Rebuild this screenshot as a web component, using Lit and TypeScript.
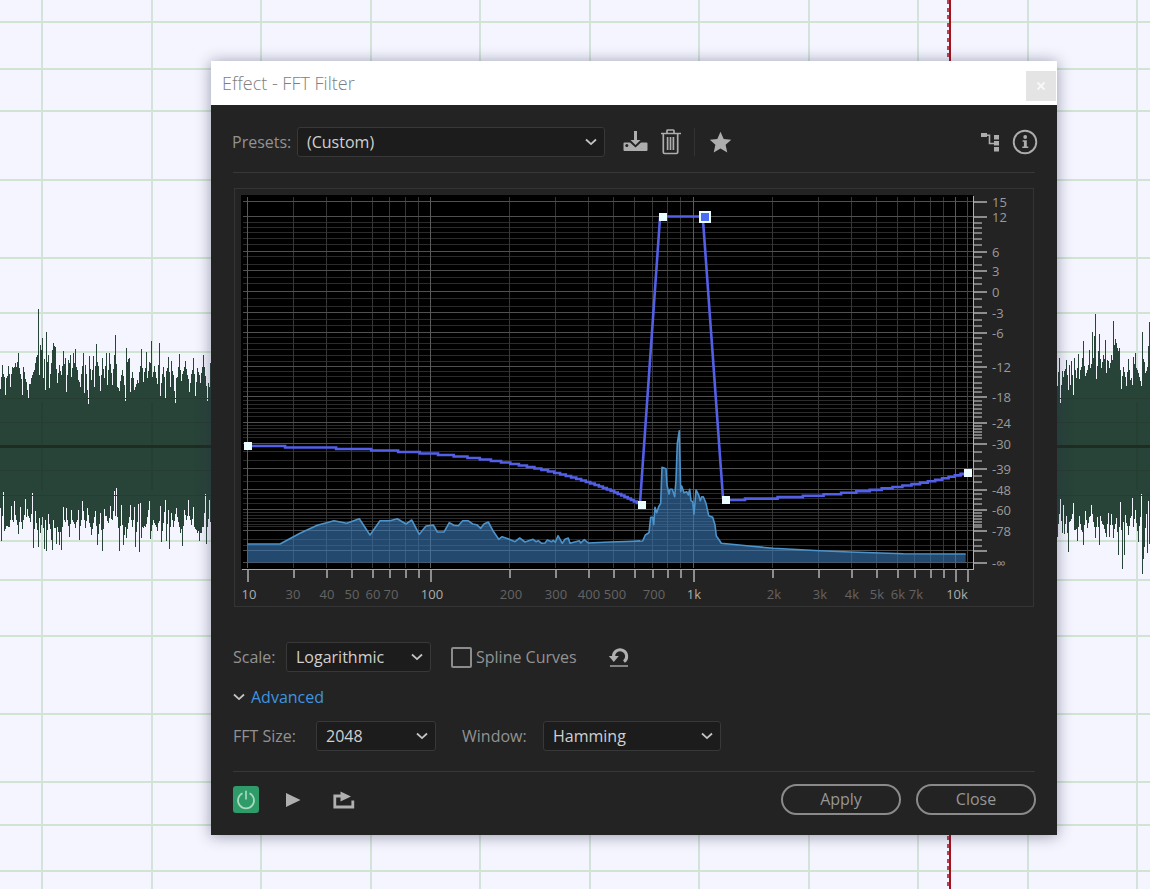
import { LitElement, html, svg, css } from "lit";
import { customElement, property } from "lit/decorators.js";

type Point = [number, number];

// Waveform outline: [column, edge] turning points, three units per screen pixel.
const LEFT_TOP: Point[] = [[0,298],[6,225],[15,315],[24,228],[30,292],[36,230],[46,220],[55,190],[67,315],[70,230],[84,325],[93,265],[102,240],[110,200],[116,57],[118,255],[122,165],[127,145],[131,265],[134,208],[137,300],[139,125],[145,195],[149,293],[157,180],[160,158],[166,172],[172,280],[178,225],[184,255],[190,182],[196,205],[199,307],[205,210],[211,195],[214,260],[220,188],[226,178],[235,270],[241,290],[250,188],[254,310],[257,225],[265,342],[268,198],[275,270],[281,197],[284,290],[290,162],[296,228],[302,303],[308,205],[313,265],[319,188],[322,285],[328,188],[338,285],[346,135],[352,290],[359,302],[367,240],[376,332],[379,173],[388,205],[391,305],[397,247],[403,300],[415,280],[424,176],[430,275],[439,187],[443,265],[448,215],[454,153],[457,262],[463,228],[472,283],[479,160],[482,318],[490,230],[496,326],[499,243],[505,200],[510,290],[515,212],[526,338],[532,262],[538,192],[544,272],[556,213],[568,305],[580,203],[586,318],[592,233],[600,280],[610,195],[622,332],[628,290],[631,220]];
const LEFT_BOTTOM: Point[] = [[0,655],[4,752],[10,605],[13,722],[28,710],[34,648],[39,695],[43,632],[55,732],[61,652],[67,718],[76,628],[91,697],[97,610],[100,775],[106,662],[115,770],[118,685],[121,728],[127,680],[133,778],[136,690],[139,783],[145,673],[157,780],[160,690],[169,762],[172,710],[178,765],[184,780],[190,652],[196,697],[199,655],[208,740],[214,660],[226,715],[235,660],[238,750],[247,633],[256,715],[262,655],[274,735],[286,663],[292,765],[301,670],[307,782],[313,658],[325,700],[331,648],[337,690],[343,602],[346,678],[349,595],[358,782],[364,645],[370,765],[376,710],[379,745],[391,645],[397,710],[403,652],[406,770],[415,642],[418,785],[421,640],[424,745],[439,703],[448,633],[451,748],[460,690],[472,722],[481,648],[484,755],[496,630],[499,752],[505,660],[508,777],[514,668],[520,710],[529,655],[547,768],[553,660],[559,690],[565,630],[574,705],[580,650],[583,710],[598,752],[610,710],[616,613],[619,762],[628,630],[631,697]];
const RIGHT_TOP: Point[] = [[22,287],[28,205],[31,340],[37,243],[40,260],[49,210],[55,300],[58,225],[61,285],[64,212],[70,315],[73,205],[79,265],[85,192],[88,267],[100,153],[106,258],[112,240],[118,180],[121,235],[127,127],[130,205],[136,73],[139,268],[148,132],[154,235],[166,150],[169,248],[172,210],[181,220],[190,92],[199,160],[205,182],[208,173],[214,297],[220,232],[229,288],[235,207],[241,270],[247,285],[250,200],[256,190],[262,240],[274,288],[277,126],[286,250],[292,232],[298,95]];
const RIGHT_BOTTOM: Point[] = [[22,740],[31,627],[37,730],[40,645],[43,732],[49,678],[55,785],[58,697],[70,640],[73,720],[82,752],[88,678],[100,765],[106,662],[112,715],[124,645],[136,745],[142,680],[148,765],[151,678],[169,740],[175,668],[178,740],[184,673],[190,745],[199,685],[205,795],[211,637],[217,838],[220,695],[223,795],[226,675],[235,735],[247,625],[250,710],[256,660],[265,757],[274,612],[277,853],[283,770],[289,672],[292,790],[295,632],[298,762]];

// Expands turning points to one value per column, with a repeatable jitter between them.
function expand(points: Point[], originX: number, base: number): Map<number, number> {
  const out = new Map<number, number>();
  let seed = 17;
  const rand = () => (seed = (seed * 16807) % 2147483647) / 2147483647;
  const known = points.map(([x, y]) => [Math.floor(x / 3), y] as Point);
  for (let i = 0; i < known.length; i++) {
    const [x0, y0] = known[i];
    out.set(originX + x0, 290 + y0 / 3);
    const next = known[i + 1];
    if (!next) break;
    for (let x = x0 + 1; x < next[0]; x++) {
      const t = (x - x0) / (next[0] - x0);
      const line = y0 + (next[1] - y0) * t;
      out.set(originX + x, 290 + (line + (base - line) * rand() * 0.7) / 3);
    }
  }
  return out;
}

function wavePath(top: Point[], bottom: Point[], originX: number): string {
  const upper = expand(top, originX, 245);
  const lower = expand(bottom, originX, 702);
  let d = "";
  for (const [x, y] of upper) {
    const y2 = lower.get(x) ?? 520;
    d += `M${x} ${Math.round(y)}h1V${Math.round(y2)}h-1z`;
  }
  return d;
}

const WAVE = wavePath(LEFT_TOP, LEFT_BOTTOM, 0) + wavePath(RIGHT_TOP, RIGHT_BOTTOM, 1050);
const TRACK_ROWS = [21, 68, 110, 179, 257, 312, 351, 540, 579, 635, 713, 781, 824, 870];
const TRACK_COLS = [41, 151, 260, 370, 479, 589, 698, 808, 917, 1027, 1136];
const INNER_ROWS = [398, 422, 470, 495];

// Plot geometry, measured from the panel's own corner.
const MAJOR_ROWS: [number, string][] = [[14,"15"],[29,"12"],[64,"6"],[83,"3"],[104,"0"],[125,"-3"],[145,"-6"],[179,"-12"],[209,"-18"],[235,"-24"],[256,"-30"],[281,"-39"],[302,"-48"],[322,"-60"],[343,"-78"],[363,""],[375,"-∞"]];
const MINOR_ROWS = [35,40,45,51,57,69,77,90,96,111,119,132,138,150,156,162,168,174,184,189,195,200,204,213,217,221,225,229,238,241,244,247,250,264,273,288,294,306,311,316,325,328,331,334,337,339,352,358];
const xOf = (hz: number) => Math.round(197 + 262.5 * Math.log10(hz / 100) - 1);
const MINOR_COLS = [30,40,50,60,70,80,90,200,300,400,500,600,700,800,900,2000,3000,4000,5000,6000,7000,8000,9000].map(xOf);
const MAJOR_COLS = [14, 197, 460, 722];
const FREQ_LABELS: [number, string, boolean][] = [[15,"10",true],[59,"30",false],[93,"40",false],[118,"50",false],[139,"60",false],[157,"70",false],[198,"100",true],[277,"200",false],[322,"300",false],[355,"400",false],[381,"500",false],[420,"700",false],[460,"1k",true],[540,"2k",false],[586,"3k",false],[618,"4k",false],[643,"5k",false],[664,"6k",false],[682,"7k",false],[723,"10k",true]];

const SPECTRUM_A: Point[] = [[52,432],[150,432],[210,400],[262,376],[312,362],[350,370],[388,356],[420,405],[450,362],[480,362],[502,356],[528,372],[545,360],[568,403],[588,378],[610,375],[622,396],[642,396],[658,368],[672,376],[685,377],[698,362],[714,362],[728,372],[740,374],[752,385],[762,372],[775,366],[790,394],[806,418],[816,410],[836,417],[855,425],[869,414],[885,426],[909,418],[918,425],[925,422],[935,430],[945,429],[952,420],[965,425],[970,421],[976,427],[984,407],[997,430],[1005,418],[1015,414],[1020,430],[1048,422],[1052,429],[1063,419],[1075,429],[1140,426],[1230,423]];
const SPECTRUM_B: Point[] = [[0,425],[68,423],[76,405],[87,398],[92,352],[98,352],[101,374],[105,322],[110,338],[116,320],[122,310],[126,202],[138,206],[141,255],[147,282],[150,268],[157,268],[164,290],[168,240],[172,130],[178,92],[182,275],[185,258],[192,278],[200,275],[205,285],[209,268],[213,302],[218,305],[222,343],[228,270],[236,285],[241,302],[245,290],[250,290],[258,310],[266,347],[278,352],[285,375],[289,408],[296,418],[304,430],[380,437],[460,445],[600,452],[690,456],[850,461],[1037,462]];
const SPECTRUM = [
  ...SPECTRUM_A.map(([x, y]) => [x / 3 - 4, y / 3 + 212]),
  ...SPECTRUM_B.map(([x, y]) => [x / 3 + 386, y / 3 + 212]),
].map(([x, y]) => `${x.toFixed(1)},${y.toFixed(1)}`);

function curve(): string {
  const px = (hz: number) => 197 + 262.5 * Math.log10(hz / 100);
  let d = "M14 258";
  let y = 258;
  for (let hz = 27.8; hz < 630; hz += 15.7) {
    d += `H${px(hz).toFixed(1)}`;
    y += 1.5;
    d += `V${y.toFixed(1)}`;
  }
  d += "L406 315L426 30L429 28.5H471L469 32L489 310L492 312";
  y = 312;
  for (let hz = 1571; hz < 10900; hz += 520) {
    d += `H${px(hz).toFixed(1)}`;
    y -= 1.45;
    d += `V${y.toFixed(1)}`;
  }
  return d + "H733";
}
const CURVE = curve();

@customElement("track-view")
class TrackView extends LitElement {
  static styles = css`
    :host { display: block; background: #f4f5fe; }
    .track { display: block; width: 100%; height: 100%; }
  `;
  render() {
    return html`<svg class="track" viewBox="0 0 1150 889" preserveAspectRatio="none" shape-rendering="crispEdges" aria-hidden="true">
      ${TRACK_COLS.map((x) => svg`<rect x=${x} y="0" width="2" height="889" fill="#d3e3d9"/>`)}
      ${TRACK_ROWS.map((y) => svg`<rect x="0" y=${y} width="1150" height="2" fill="#cfe4d3"/>`)}
      <path d=${WAVE} fill="#284338"/>
      ${INNER_ROWS.map((y) => svg`<rect x="0" y=${y} width="1150" height="1" fill="#263d32"/>`)}
      ${TRACK_COLS.map((x) => svg`<rect x=${x} y="402" width="2" height="88" fill="#263f34"/>`)}
      <rect x="0" y="445" width="1150" height="3" fill="#1f2c20"/>
      <rect x="949" y="0" width="2" height="889" fill="#a01420"/>
      <path d="M948 0V889" stroke="#b84552" stroke-width="2" stroke-dasharray="4 3.6"/>
    </svg>`;
  }
}

@customElement("filter-graph")
class FilterGraph extends LitElement {
  static styles = css`
    :host { display: block; }
    .graph { display: block; width: 100%; height: auto; font-family: "Open Sans", "Noto Sans", sans-serif; font-size: 13px; }
    .gain { fill: #9a9a9a; }
    .freq { fill: #646464; text-anchor: middle; }
    .decade { fill: #adadad; }
  `;
  render() {
    return html`<svg class="graph" viewBox="0 0 800 419" role="img" aria-label="FFT filter response">
      <g shape-rendering="crispEdges">
        <rect x="0.5" y="0.5" width="799" height="418" fill="none" stroke="#343434"/>
        <rect x="7" y="7" width="732" height="374" fill="#000"/>
        ${MINOR_ROWS.map((y) => svg`<rect x="9" y=${y - 1} width="730" height="1" fill="#2b2b2b"/>`)}
        ${MINOR_COLS.map((x) => svg`<rect x=${x} y="9" width="1" height="371" fill="#363636"/>`)}
        ${MAJOR_ROWS.map(([y]) => svg`<rect x="9" y=${y - 1} width="730" height="1" fill="#505050"/>`)}
        ${MAJOR_COLS.map((x) => svg`<rect x=${x - 1} y="9" width="1" height="371" fill="#5a5a5a"/>`)}
        <rect x="733" y="9" width="1" height="371" fill="#444"/>
      </g>
      <polygon points=${`13.3,374.5 ${SPECTRUM.join(" ")} 731.7,374.5`} fill="rgb(58,122,183)" fill-opacity="0.6"/>
      <polyline points=${SPECTRUM.join(" ")} fill="none" stroke="#4c93cb" stroke-width="1.6" stroke-linejoin="round"/>
      <g shape-rendering="crispEdges" fill="#8d8d8d">
        <rect x="8" y="381" width="732" height="1" fill="#a8a8a8"/>
        <rect x="739" y="8" width="1" height="374" fill="#b0b0b0"/>
        ${MAJOR_ROWS.map(([y]) => svg`<rect x="740" y=${y - 1} width="13" height="2"/>`)}
        ${MINOR_ROWS.map((y) => svg`<rect x="740" y=${y - 1} width="8" height="2" fill="#7c7c7c"/>`)}
        ${MINOR_COLS.map((x) => svg`<rect x=${x} y="382" width="2" height="8"/>`)}
        ${[...MAJOR_COLS, 734].map((x) => svg`<rect x=${x - 1} y="382" width="2" height="12"/>`)}
      </g>
      <path d=${CURVE} fill="none" stroke="#525fe6" stroke-width="2.6"/>
      <g fill="#eafdff" shape-rendering="crispEdges">
        <rect x="10" y="254" width="8" height="8"/>
        <rect x="404" y="313" width="8" height="8"/>
        <rect x="425" y="25" width="8" height="8"/>
        <rect x="488" y="308" width="8" height="8"/>
        <rect x="730" y="281" width="8" height="8"/>
        <rect x="465" y="23" width="12" height="12"/>
        <rect x="467" y="25" width="8" height="8" fill="#4c6cf4"/>
      </g>
      ${MAJOR_ROWS.map(([y, t]) => (t ? svg`<text class="gain" x="758" y=${y + 5}>${t}</text>` : ""))}
      ${FREQ_LABELS.map(([x, t, d]) => svg`<text class=${d ? "freq decade" : "freq"} x=${x} y="411">${t}</text>`)}
    </svg>`;
  }
}

@customElement("field-select")
class FieldSelect extends LitElement {
  @property() label = "";
  @property({ attribute: false }) options: string[] = [];
  static styles = css`
    :host { display: flex; align-items: center; }
    .label { flex: 0 0 var(--label-width, auto); color: #929292; white-space: nowrap; }
    .box { display: grid; flex: 0 0 var(--box-width, auto); align-items: center; }
    .select {
      grid-area: 1 / 1; appearance: none; box-sizing: border-box; width: 100%; height: 30px; margin: 0;
      padding: 0 28px 1px 9px; border: 1px solid #383838; border-radius: 3px;
      background: #1c1c1c; color: #d0d0d0; font: inherit;
    }
    .chevron { grid-area: 1 / 1; justify-self: end; margin-right: 7px; width: 14px; height: 10px; pointer-events: none; }
  `;
  render() {
    return html`<label class="label" for="field">${this.label}</label>
      <span class="box">
        <select class="select" id="field">${this.options.map((o) => html`<option>${o}</option>`)}</select>
        <svg class="chevron" viewBox="0 0 14 10"><path d="M2 2.500l5 4.600 5-4.600" fill="none" stroke="#c4c4c4" stroke-width="1.800"/></svg>
      </span>`;
  }
}

@customElement("app-root")
class AppRoot extends LitElement {
  static styles = css`
    :host { display: block; }
    .stage {
      display: grid; position: relative; box-sizing: border-box; min-height: 100vh;
      padding: 61px 93px 54px 211px; align-items: start;
      font: 16px/20px "Open Sans", "Noto Sans", sans-serif;
    }
    .backdrop { position: absolute; inset: 0; }
    .dialog { position: relative; min-width: 0; background: #232323; box-shadow: 0 1px 14px rgba(40, 40, 70, 0.45); }
    .titlebar { display: flex; height: 44px; justify-content: space-between; align-items: center; padding: 0 1px 0 11px; background: #fff; }
    .title { margin: 0; font-size: 18px; line-height: 24px; font-weight: 300; color: #808080; }
    .button { display: grid; place-items: center; padding: 0; border: 0; background: none; color: #adadad; font: inherit; }
    .close { width: 30px; height: 30px; margin-top: 6px; background: #e4e4e4; color: #f8f8f8; }
    .toolbar { display: flex; align-items: center; margin: 22px 19px 15px 21px; height: 30px; }
    .preset { --label-width: 65px; --box-width: 308px; }
    .save { margin-left: 17px; }
    .trash { margin-left: 11px; }
    .rule { width: 1px; height: 28px; margin: 0 14px 0 12px; background: #333; }
    .route { margin-left: auto; }
    .info { margin-left: 12px; }
    .divider { height: 0; margin: 0 22px; border: 0; border-top: 1px solid #383838; }
    .graph { margin: 15px 23px 35px; }
    .row { display: flex; align-items: center; height: 30px; margin: 0 22px; }
    .scale { --label-width: 53px; --box-width: 145px; }
    .spline { display: flex; align-items: center; margin-left: 20px; color: #929292; }
    .check { appearance: none; box-sizing: border-box; width: 21px; height: 21px; margin: 0 4px 0 0; border: 2px solid #8c8c8c; border-radius: 2px; }
    .reset { margin-left: 31px; }
    .advanced { display: flex; align-items: center; gap: 6px; margin: 15px 22px 14px; height: 20px; color: #3f94e0; }
    .size { --label-width: 83px; --box-width: 120px; }
    .window { --label-width: 81px; --box-width: 178px; margin-left: 26px; }
    .last { margin-bottom: 20px; }
    .footer { display: flex; align-items: center; margin: 12px 21px 20px 22px; height: 31px; }
    .power { width: 26px; height: 27px; border-radius: 3px; background: #2f9b69; color: #a8d8c0; }
    .play { margin-left: 26px; }
    .loop { margin-left: 32px; }
    .pill { box-sizing: border-box; width: 120px; height: 31px; padding-bottom: 2px; border: 2px solid #8a8a8a; border-radius: 16px; color: #969696; }
    .apply { margin-left: auto; }
    .dismiss { margin-left: 15px; }
  `;

  render() {
    return html`<main class="stage">
      <track-view class="backdrop"></track-view>
      <section class="dialog" role="dialog" aria-labelledby="title">
        <header class="titlebar">
          <h1 class="title" id="title">Effect - FFT Filter</h1>
          <button class="button close" aria-label="Close window">
            <svg width="10" height="10" viewBox="0 0 10 10"><path d="M1.500 1.500l7 7m0-7l-7 7" stroke="currentColor" stroke-width="1.800"/></svg>
          </button>
        </header>
        <div class="toolbar">
          <field-select class="preset" label="Presets:" .options=${["(Custom)"]}></field-select>
          <button class="button save" aria-label="Save preset">
            <svg width="27" height="24" viewBox="0 0 27 24" fill="currentColor"><path d="M2.500 12.500H8l5.500 5 5.500-5h5.500q1 0 1 1V20q0 1-1 1H2.500q-1 0-1-1v-6.500q0-1 1-1z"/><circle cx="4.800" cy="15.500" r="1.500" fill="#232323"/><path d="M12 1h3v9h3.500l-5 5-5-5H12z"/></svg>
          </button>
          <button class="button trash" aria-label="Delete preset">
            <svg width="22" height="26" viewBox="0 0 22 26" fill="none" stroke="currentColor" stroke-width="1.700"><path d="M1 4.500h20M7 4V1.800q0-.8.8-.8h5.400q.8 0 .8.8V4M3.300 5v18.200q0 1.300 1.300 1.300h11.800q1.300 0 1.300-1.300V5M7.600 8v13M10.500 8v13M13.400 8v13"/></svg>
          </button>
          <span class="rule"></span>
          <button class="button star" aria-label="Favorite">
            <svg width="23" height="23" viewBox="0 0 23 23" fill="currentColor"><path d="M11.500.8l3.200 7.100 7.600.8-5.700 5.100 1.700 7.800-6.800-4.100-6.800 4.100 1.700-7.800L.8 8.700l7.500-.8z"/></svg>
          </button>
          <button class="button route" aria-label="Channel map">
            <svg width="20" height="20" viewBox="0 0 20 20" fill="currentColor"><path d="M1 1h6v4H1zM14 3h5v4.500h-5zM14 9h5v4.500h-5zM14 15h5v4.500h-5z"/><path d="M7 3.200h2.500v8.300H14" fill="none" stroke="currentColor" stroke-width="1.600"/></svg>
          </button>
          <button class="button info" aria-label="Information">
            <svg width="26" height="26" viewBox="0 0 26 26" fill="currentColor"><circle cx="13" cy="13" r="11.300" fill="none" stroke="currentColor" stroke-width="1.900"/><circle cx="13.200" cy="8" r="1.900"/><path d="M10.600 11.200h4.200v6.300h1.500v1.600h-6v-1.600h1.600v-4.700h-1.300z"/></svg>
          </button>
        </div>
        <hr class="divider">
        <filter-graph class="graph"></filter-graph>
        <div class="row">
          <field-select class="scale" label="Scale:" .options=${["Logarithmic", "Linear"]}></field-select>
          <label class="spline"><input class="check" type="checkbox">Spline Curves</label>
          <button class="button reset" aria-label="Reset">
            <svg width="23" height="22" viewBox="0 0 23 22"><path d="M5.500 11a6.600 6.600 0 1 1 10.500 4.600" fill="none" stroke="#b0b0b0" stroke-width="3"/><path d="M.8 10h10l-5 6z" fill="#b0b0b0"/><path d="M2 20h18" stroke="#9a9a9a" stroke-width="1.600"/></svg>
          </button>
        </div>
        <button class="button advanced" aria-expanded="true">
          <svg width="12" height="10" viewBox="0 0 12 10"><path d="M1 2.500l5 4.600 5-4.600" fill="none" stroke="#c4c4c4" stroke-width="1.800"/></svg>
          Advanced
        </button>
        <div class="row last">
          <field-select class="size" label="FFT Size:" .options=${["2048", "4096"]}></field-select>
          <field-select class="window" label="Window:" .options=${["Hamming", "Hann"]}></field-select>
        </div>
        <hr class="divider">
        <footer class="footer">
          <button class="button power" aria-label="Toggle power">
            <svg width="20" height="20" viewBox="0 0 20 20" fill="none" stroke="currentColor" stroke-width="1.700"><path d="M6.500 3.200a8 8 0 1 0 7 0M10 .8v8.700"/></svg>
          </button>
          <button class="button play" aria-label="Play">
            <svg width="16" height="16" viewBox="0 0 16 16" fill="#b0b0b0"><path d="M1 1l14.500 7L1 15z"/></svg>
          </button>
          <button class="button loop" aria-label="Loop playback">
            <svg width="22" height="18" viewBox="0 0 22 18"><path d="M8 5H1.800v11h18v-6.500" fill="none" stroke="#b0b0b0" stroke-width="2.800"/><path d="M7.500.5l10.500 5-10.500 5z" fill="#b0b0b0"/></svg>
          </button>
          <button class="button pill apply">Apply</button>
          <button class="button pill dismiss">Close</button>
        </footer>
      </section>
    </main>`;
  }
}
